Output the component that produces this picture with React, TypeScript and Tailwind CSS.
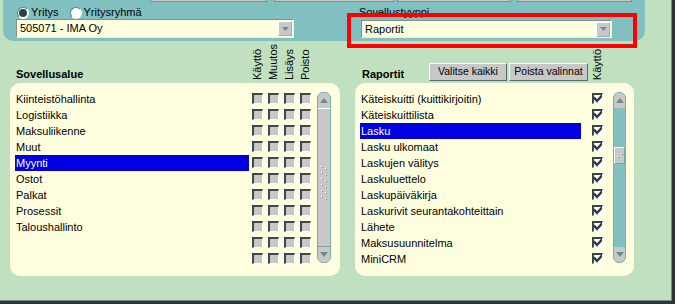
const leftRows = [
  'Kiinteistöhallinta',
  'Logistiikka',
  'Maksuliikenne',
  'Muut',
  'Myynti',
  'Ostot',
  'Palkat',
  'Prosessit',
  'Taloushallinto',
  '',
  '',
]

const rightRows = [
  'Käteiskuitti (kuittikirjoitin)',
  'Käteiskuittilista',
  'Lasku',
  'Lasku ulkomaat',
  'Laskujen välitys',
  'Laskuluettelo',
  'Laskupäiväkirja',
  'Laskurivit seurantakohteittain',
  'Lähete',
  'Maksusuunnitelma',
  'MiniCRM',
]

const font = "font-['Liberation_Sans',Arial,sans-serif]"

const Radio = ({ checked, label }: { checked?: boolean; label: string }) => (
  <div className="flex items-center">
    <div className="flex h-[12px] w-[12px] items-center justify-center rounded-full border border-[#6a7c7c] border-b-white border-r-white bg-white">
      {checked && <div className="h-[8px] w-[8px] rounded-full bg-[#2e4242]" />}
    </div>
    <span className="ml-[2px] leading-[13px]">{label}</span>
  </div>
)

const SelectBox = ({ value, className }: { value: string; className: string }) => (
  <div className={`flex items-center justify-between border border-[#7e9090] border-b-[#e8f0f0] border-r-[#e8f0f0] bg-[#ffffe0] pl-[3px] pr-[1px] ${className}`}>
    <span className="leading-[13px]">{value}</span>
    <div className="flex h-[15px] w-[14px] items-center justify-center border border-white border-b-[#a0b0b0] border-r-[#a0b0b0] bg-[#c8c8c8]">
      <svg width="7" height="4" viewBox="0 0 7 4">
        <path d="M0 0 H7 L3.5 4 Z" fill="#6e8e8e" />
      </svg>
    </div>
  </div>
)

const Box = ({ checked }: { checked?: boolean }) => (
  <div
    className={`mt-[2px] h-[11px] w-[11px] border-l-2 border-t-2 border-[#3a4a4a] border-b border-r border-b-white border-r-white ${
      checked ? 'bg-white' : 'bg-[#c8c8c8]'
    }`}
  >
    {checked && (
      <svg width="8" height="8" viewBox="0 0 8 8" className="block">
        <path d="M0.6 3.2 L3 6 L7.6 1" stroke="#283838" strokeWidth="2.4" fill="none" strokeLinecap="square" />
      </svg>
    )}
  </div>
)

const VHead = ({ text }: { text: string }) => (
  <div className="flex w-[11px] justify-center">
    <span className="rotate-180 leading-[11px] [writing-mode:vertical-rl]">{text}</span>
  </div>
)

const ArrowBtn = ({ up }: { up?: boolean }) => (
  <div className="flex h-[15px] items-center justify-center bg-[#c8c8c8]">
    <svg width="8" height="5" viewBox="0 0 8 5">
      <path d={up ? 'M0 5 H8 L4 0 Z' : 'M0 0 H8 L4 5 Z'} fill="#6e8e8e" />
    </svg>
  </div>
)

const Grip = () => (
  <svg width="8" height="34" viewBox="0 0 8 34">
    {[0, 6, 12, 18, 24, 30].map((y) => (
      <g key={y}>
        <rect x="1" y={y} width="1" height="1" fill="#ffffff" />
        <rect x="2" y={y + 1} width="1" height="1" fill="#7a8a8a" />
        <rect x="5" y={y + 2} width="1" height="1" fill="#ffffff" />
        <rect x="6" y={y + 3} width="1" height="1" fill="#7a8a8a" />
      </g>
    ))}
  </svg>
)

const LeftScroll = () => (
  <div className="ml-[6px] mt-[1px] flex h-[171px] w-[14px] flex-col overflow-hidden rounded-[6px] border border-[#76aeae] bg-[#c8c8c8]">
    <ArrowBtn up />
    <div className="flex flex-1 items-center justify-center border-y border-[#8aa0a0] border-t-white pt-[10px]">
      <Grip />
    </div>
    <ArrowBtn />
  </div>
)

const RightScroll = () => (
  <div className="ml-[10px] mt-[1px] flex h-[171px] w-[13px] flex-col overflow-hidden rounded-[6px] border border-[#76aeae] bg-[#80c0c0]">
    <ArrowBtn up />
    <div className="flex-1">
      <div className="mt-[39px] flex h-[17px] items-center justify-center border border-white border-b-[#8aa0a0] border-r-[#8aa0a0] bg-[#c8c8c8]">
        <svg width="6" height="6" viewBox="0 0 6 6">
          <rect x="4" y="0" width="1" height="1" fill="#ffffff" />
          <rect x="5" y="1" width="1" height="1" fill="#7a8a8a" />
          <rect x="0" y="3" width="1" height="1" fill="#ffffff" />
          <rect x="1" y="4" width="1" height="1" fill="#7a8a8a" />
        </svg>
      </div>
    </div>
    <ArrowBtn />
  </div>
)

const GrayButton = ({ label, w }: { label: string; w: string }) => (
  <div className={`flex h-[18px] items-center justify-center border border-white border-b-[#5a6a6a] border-r-[#5a6a6a] bg-[#c8c8c8] text-[10.5px] ${w}`}>
    {label}
  </div>
)

export default function App() {
  return (
    <div className={`flex h-[304px] w-[677px] bg-white text-[11px] text-black ${font}`}>
      <div className="flex w-[672px] flex-col">
        <div className="relative h-[300px] border-r border-[#6e8a8a] bg-[#c0e0c0]">
          {/* top panel */}
          <div className="ml-[3px] h-[41px] w-[642px] rounded-b-[10px] bg-[#80c0c0]">
            <div className="ml-[147px] flex h-[2px] gap-[7px]">
              <div className="w-[117px] border-x border-b border-[#7a9090] bg-[#c8c8c8]" />
              <div className="w-[120px] border-x border-b border-[#7a9090] bg-[#c8c8c8]" />
              <div className="-ml-[4px] w-[114px] border-x border-b border-[#7a9090] bg-[#c8c8c8]" />
              <div className="-ml-[1px] w-[115px] border-x border-b border-[#7a9090] bg-[#c8c8c8]" />
            </div>
            <div className="flex">
              <div className="ml-[13px] w-[278px]">
                <div className="mt-[4px] flex h-[13px] items-center gap-[11px] pl-[1px]">
                  <Radio checked label="Yritys" />
                  <Radio label="Yritysryhmä" />
                </div>
                <SelectBox value="505071 - IMA Oy" className="h-[19px] w-[278px]" />
              </div>
              <div className="ml-[67px] w-[251px]">
                <div className="-ml-[2px] mt-[4px] h-[13px] leading-[13px]">Sovellustyyppi</div>
                <SelectBox value="Raportit" className="mt-[1px] h-[18px] w-[251px]" />
              </div>
            </div>
          </div>

          {/* lower section */}
          <div className="ml-[10px] flex gap-[15px]">
            <div className="w-[330px]">
              <div className="flex h-[42px] items-end">
                <div className="w-[242px] pb-[2px] pl-[6px] font-bold leading-[13px]">Sovellusalue</div>
                <div className="flex gap-[5px] pb-[3px]">
                  <VHead text="Käyttö" />
                  <VHead text="Muutos" />
                  <VHead text="Lisäys" />
                  <VHead text="Poisto" />
                </div>
              </div>
              <div className="flex h-[193px] rounded-[10px] bg-[#ffffe0] pl-[5px] pt-[8px]">
                <div>
                  {leftRows.map((r, i) => (
                    <div key={i} className="flex h-[16px] items-start">
                      <div
                        className={`h-[16px] w-[234px] pl-[1px] leading-[16px] ${
                          r === 'Myynti' ? 'bg-[#0000e0] text-white' : ''
                        }`}
                      >
                        {r}
                      </div>
                      <div className="ml-[3px] flex gap-[5px]">
                        <Box />
                        <Box />
                        <Box />
                        <Box />
                      </div>
                    </div>
                  ))}
                </div>
                <LeftScroll />
              </div>
            </div>

            <div className="w-[279px]">
              <div className="flex h-[42px] items-end">
                <div className="w-[74px] pb-[2px] pl-[7px] font-bold leading-[13px]">Raportit</div>
                <div className="mb-[2px] flex gap-[2px]">
                  <GrayButton label="Valitse kaikki" w="w-[78px]" />
                  <GrayButton label="Poista valinnat" w="w-[79px]" />
                </div>
                <div className="ml-[4px] pb-[3px]">
                  <VHead text="Käyttö" />
                </div>
              </div>
              <div className="flex h-[193px] rounded-[10px] bg-[#ffffe0] pl-[5px] pt-[8px]">
                <div>
                  {rightRows.map((r) => (
                    <div key={r} className="flex h-[16px] items-start">
                      <div
                        className={`h-[16px] w-[221px] pl-[1px] leading-[16px] ${
                          r === 'Lasku' ? 'bg-[#0000e0] text-white' : ''
                        }`}
                      >
                        {r}
                      </div>
                      <div className="ml-[11px]">
                        <Box checked />
                      </div>
                    </div>
                  ))}
                </div>
                <RightScroll />
              </div>
            </div>
          </div>

          {/* highlight frame */}
          <div className="absolute left-[347px] top-[13px] h-[35px] w-[290px] border-4 border-[#ff0000]" />
        </div>
        <div className="h-[1px] bg-[#6e8a8a]" />
        <div className="h-[3px] bg-[#2c3434]" />
      </div>
      <div className="h-[304px] w-[3px] bg-[#2c3434]" />
    </div>
  )
}
